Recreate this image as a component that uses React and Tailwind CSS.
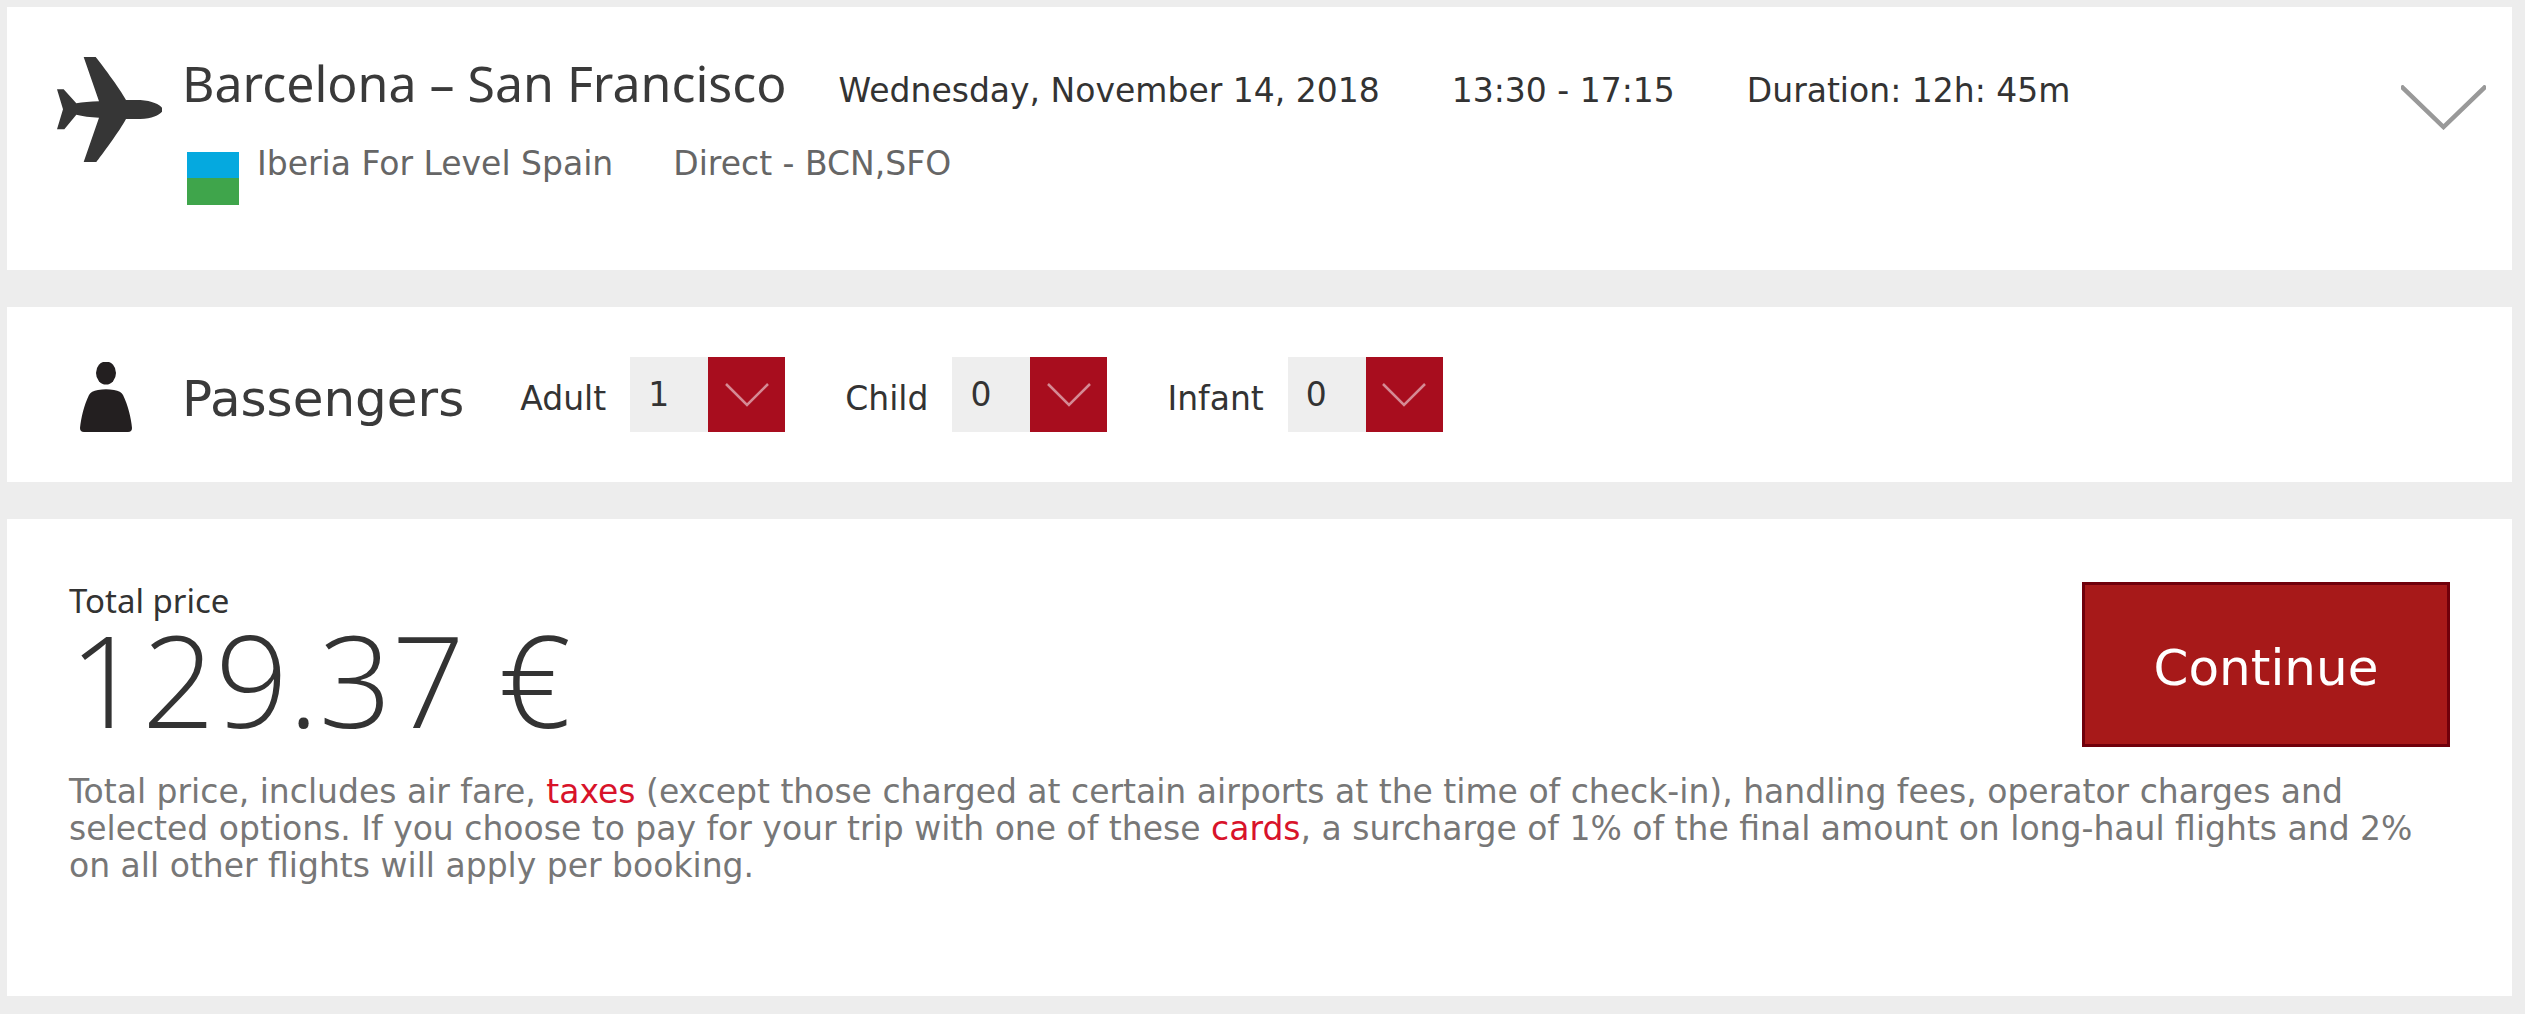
// src/App.jsx
import { useState } from "react";

const passengerTypes = [
  { id: "adult", label: "Adult", initial: 1, min: 1 },
  { id: "child", label: "Child", initial: 0, min: 0 },
  { id: "infant", label: "Infant", initial: 0, min: 0 },
];

function PlaneIcon() {
  return (
    <svg viewBox="0 0 315 315" className="w-[105px] h-[105px] shrink-0" fill="#363636" aria-hidden="true">
      <path d="M80 0H116C126 12 190 96 207 129H250C285 131 308 143 315 152V164C306 175 285 184 250 186H207C190 219 130 300 118 315H80L126 182C100 180 76 178 58 173L22 217H0L18 157L0 97H20L58 139C76 136 100 134 126 133Z" />
    </svg>
  );
}

function PersonIcon() {
  return (
    <svg viewBox="0 0 52 70" className="w-[52px] h-[70px]" fill="#231f20" aria-hidden="true">
      <ellipse cx="26" cy="11" rx="10" ry="11.5" />
      <path d="M18 28Q26 26.500 34 28Q41 29 43 33C48 43 51 56 52 66Q52 70 48 70H4Q0 70 0 66C1 56 4 43 9 33Q11 29 18 28Z" />
    </svg>
  );
}

function LevelLogo() {
  return (
    <svg viewBox="0 0 52 53" className="w-[52px] h-[53px]" role="img" aria-label="Level">
      <path d="M0 0H52V26H0Z" fill="#05a9df" />
      <path d="M0 26H52V53H0Z" fill="#3fa54b" />
    </svg>
  );
}

function PassengerSelect({ id, label, initial, min }) {
  const [count, setCount] = useState(initial);

  return (
    <div className="flex items-center">
      <label htmlFor={id} className="mr-6 pt-2">
        {label}
      </label>
      <div className="relative">
        <select
          id={id}
          value={count}
          onChange={(e) => setCount(Number(e.target.value))}
          className="block appearance-none w-[155px] h-[75px] pl-[18px] bg-[#eeeeee] text-[#333333] outline-none"
        >
          {[0, 1, 2, 3, 4, 5, 6, 7, 8, 9]
            .filter((n) => n >= min)
            .map((n) => (
              <option key={n} value={n}>
                {n}
              </option>
            ))}
        </select>
        {/* Flèche rouge posée sur le select natif */}
        <span className="pointer-events-none absolute inset-y-0 right-0 w-[77px] flex items-center justify-center bg-[#a80d1e]">
          <svg viewBox="0 0 44 24" className="w-[44px] h-[24px]" fill="none" stroke="#d58a94" strokeWidth="2.5" aria-hidden="true">
            <path d="M1 1L22 22L43 1" />
          </svg>
        </span>
      </div>
    </div>
  );
}

function FlightCard() {
  return (
    <section className="flex items-start bg-white pt-[46px] pb-[65px] pl-[50px] pr-[26px]">
      <div className="mt-1">
        <PlaneIcon />
      </div>
      <div className="flex-1 pl-5">
        <div className="flex items-baseline leading-[60px]">
          <h2 className="font-['Noto_Sans',sans-serif] text-[50px] text-[#3a3a3a]">Barcelona – San Francisco</h2>
          <span className="ml-[52px]">Wednesday, November 14, 2018</span>
          <span className="ml-[72px]">13:30 - 17:15</span>
          <span className="ml-[72px]">Duration: 12h: 45m</span>
        </div>
        <div className="flex items-start mt-6 pl-[5px] text-[#666666]">
          <div className="pt-[7px]">
            <LevelLogo />
          </div>
          <span className="ml-[18px]">Iberia For Level Spain</span>
          <span className="ml-[60px]">Direct - BCN,SFO</span>
        </div>
      </div>
      <button type="button" aria-label="Show flight details" className="mt-8">
        <svg viewBox="0 0 85 45" className="w-[85px] h-[45px]" fill="none" stroke="#999999" strokeWidth="4.5">
          <path d="M0 1L42.500 42L85 1" />
        </svg>
      </button>
    </section>
  );
}

function PassengersCard() {
  return (
    <section className="flex items-center bg-white py-[50px] pl-[50px]">
      <div className="w-[105px] pl-[23px] pt-[5px]">
        <PersonIcon />
      </div>
      <h2 className="pl-5 pt-2 text-[50px] leading-[60px] text-[#3a3a3a]">Passengers</h2>
      <div className="flex ml-[56px] gap-[60px]">
        {passengerTypes.map((type) => (
          <PassengerSelect key={type.id} {...type} />
        ))}
      </div>
    </section>
  );
}

function PriceCard() {
  return (
    <section className="bg-white pt-[63px] pb-[112px] px-[62px]">
      <div className="flex items-start justify-between">
        <div>
          <p className="font-['Noto_Sans',sans-serif]">Total price</p>
          <p className="font-['Open_Sans',sans-serif] font-light text-[128px] leading-[120px]">129.37 €</p>
        </div>
        <button
          type="button"
          className="w-[368px] h-[165px] pt-2 border-3 border-[#70000b] bg-[#a71919] text-[50px] text-white"
        >
          Continue
        </button>
      </div>
      <p className="mt-[26px] text-[#777777]">
        Total price, includes air fare,{" "}
        <a href="#taxes" className="text-[#d8132a]">
          taxes
        </a>{" "}
        (except those charged at certain airports at the time of check-in), handling fees, operator charges and
        selected options. If you choose to pay for your trip with one of these{" "}
        <a href="#cards" className="text-[#d8132a]">
          cards
        </a>
        , a surcharge of 1% of the final amount on long-haul flights and 2% on all other flights will apply per
        booking.
      </p>
    </section>
  );
}

export default function App() {
  return (
    <main className="min-h-screen flex flex-col gap-[37px] pt-[7px] pb-[18px] pl-[7px] pr-[13px] bg-[#ededed] font-['DejaVu_Sans',Verdana,sans-serif] text-[33px] leading-[37px] text-[#333333]">
      <FlightCard />
      <PassengersCard />
      <PriceCard />
    </main>
  );
}
